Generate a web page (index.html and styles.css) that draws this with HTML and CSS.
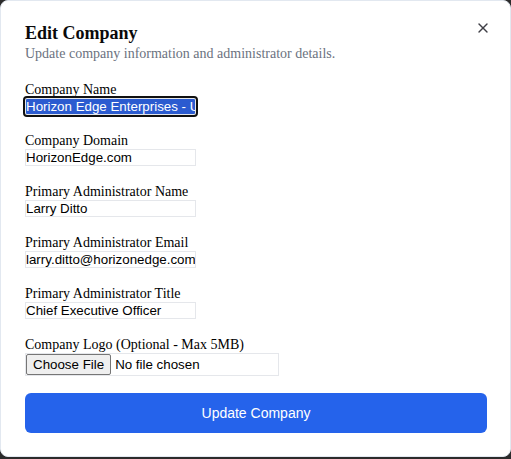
FILE: index.html
```html
<!DOCTYPE html>
<html lang="en">
<head>
<meta charset="utf-8">
<title>Edit Company</title>
<link rel="stylesheet" href="styles.css">
</head>
<body>
<div class="dialog" role="dialog" aria-labelledby="dlg-title">
  <div class="header">
    <h2 id="dlg-title" class="title">Edit Company</h2>
    <p class="subtitle">Update company information and administrator details.</p>
  </div>
  <form class="form">
    <div class="field">
      <label for="name">Company Name</label>
      <input id="name" class="text" type="text" value="Horizon Edge Enterprises - Updated">
    </div>
    <div class="field">
      <label for="domain">Company Domain</label>
      <input id="domain" class="text" type="text" value="HorizonEdge.com">
    </div>
    <div class="field">
      <label for="admin">Primary Administrator Name</label>
      <input id="admin" class="text" type="text" value="Larry Ditto">
    </div>
    <div class="field">
      <label for="email">Primary Administrator Email</label>
      <input id="email" class="text" type="email" value="larry.ditto@horizonedge.com">
    </div>
    <div class="field">
      <label for="title">Primary Administrator Title</label>
      <input id="title" class="text" type="text" value="Chief Executive Officer">
    </div>
    <div class="field">
      <label for="logo">Company Logo (Optional - Max 5MB)</label>
      <input id="logo" class="file" type="file" accept="image/*">
    </div>
    <button type="button" class="submit">Update Company</button>
  </form>
  <button type="button" class="close" aria-label="Close">
    <svg width="16" height="16" viewBox="0 0 24 24" fill="none" stroke="currentColor" stroke-width="2" stroke-linecap="round" stroke-linejoin="round"><path d="M18 6 6 18"/><path d="m6 6 12 12"/></svg>
  </button>
</div>
<script src="script.js"></script>
</body>
</html>
```
FILE: styles.css
```css
html, body {
  margin: 0;
  padding: 0;
}
body {
  background: #2b2b2b;
  width: 511px;
  height: 459px;
  overflow: hidden;
}
.dialog {
  position: relative;
  box-sizing: border-box;
  width: 511px;
  background: #ffffff;
  border: 1px solid #e2e8f0;
  border-radius: 8px;
  padding: 23px 23px 23px 24px;
  display: flex;
  flex-direction: column;
  gap: 17px;
  font-family: "Liberation Serif", "Times New Roman", serif;
  color: #000;
}
.header {
  display: flex;
  flex-direction: column;
  gap: 2px;
}
.title {
  margin: 0;
  font-size: 18px;
  line-height: 18px;
  font-weight: 700;
  color: #0a0a0a;
}
.subtitle {
  margin: 0;
  font-size: 14px;
  line-height: 20px;
  color: #6b7280;
}
.form {
  display: flex;
  flex-direction: column;
  gap: 17px;
  margin: 0;
}
.field {
  display: flex;
  flex-direction: column;
  align-items: flex-start;
}
.field label {
  font-size: 14px;
  line-height: 17px;
}
.text {
  box-sizing: border-box;
  width: 171px;
  height: 17px;
  margin: 0;
  padding: 0;
  border: 1px solid #e5e7eb;
  font-family: "Liberation Sans", Arial, sans-serif;
  font-size: 13.333px;
  color: #000;
  background: #fff;
}
.text:focus {
  outline: 2px solid #101010;
  outline-offset: 0;
  border-radius: 2px;
}
.text::selection {
  background: #2b5bd0;
  color: #fff;
}
.file {
  box-sizing: border-box;
  width: 254px;
  height: 23px;
  margin: 0;
  padding: 0;
  border: 1px solid #e5e7eb;
  font-family: "Liberation Sans", Arial, sans-serif;
  font-size: 13.333px;
  color: #000;
}
.file::file-selector-button {
  font-family: "Liberation Sans", Arial, sans-serif;
  font-size: 13.333px;
  height: 21px;
  margin: 0 4px 0 0;
  padding: 1px 6px;
  background: #efefef;
  color: #000;
  border: 1px solid #767676;
  border-radius: 2px;
}
.submit {
  height: 40px;
  margin: 0;
  border: 0;
  border-radius: 6px;
  background: #2563eb;
  color: #fff;
  font-family: "Liberation Sans", Arial, sans-serif;
  font-size: 14px;
  cursor: pointer;
}
.close {
  position: absolute;
  top: 19px;
  right: 19px;
  width: 16px;
  height: 16px;
  padding: 0;
  margin: 0;
  border: 0;
  background: transparent;
  color: #3f3f46;
  display: flex;
  align-items: center;
  justify-content: center;
  cursor: pointer;
}
.close svg {
  display: block;
}
```
FILE: script.js
```js
var inp = document.getElementById('name');
inp.focus();
inp.setSelectionRange(0, inp.value.length, 'backward');
inp.scrollLeft = 0;
```
